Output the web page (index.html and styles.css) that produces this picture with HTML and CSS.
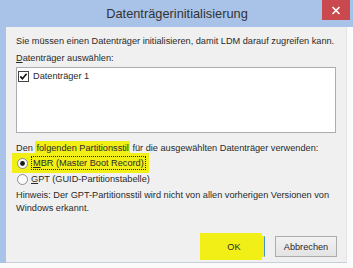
FILE: index.html
```html
<!DOCTYPE html>
<html lang="de">
<head>
    <meta charset="UTF-8">
    <meta name="viewport" content="width=device-width, initial-scale=1.0">
    <title>Datenträgerinitialisierung</title>
    <link rel="stylesheet" href="styles.css">
</head>
<body>

    <div class="window">
        <!-- Title bar -->
        <div class="titlebar">
            <div class="title">Datenträgerinitialisierung</div>
            <div class="close">
                <svg width="10" height="9" viewBox="0 0 10 9">
                    <path d="M1.5 1 L8.5 8 M8.5 1 L1.5 8" stroke="#fff" stroke-width="1.6" fill="none"/>
                </svg>
            </div>
        </div>

        <div class="frame">
            <div class="content">
                <p class="intro">Sie müssen einen Datenträger initialisieren, damit LDM darauf zugreifen kann.</p>
                <p class="label"><u>D</u>atenträger auswählen:</p>

                <!-- Disk list -->
                <div class="listbox">
                    <div class="item">
                        <svg class="checkbox" width="11" height="11" viewBox="0 0 11 11">
                            <rect x="0.5" y="0.5" width="10" height="10" fill="#fff" stroke="#444"/>
                            <path d="M2.3 5.4 L4.4 7.8 L8.6 2.8" stroke="#111" stroke-width="1.6" fill="none"/>
                        </svg>
                        <span>Datenträger 1</span>
                    </div>
                </div>

                <p class="style-label">Den <span class="marker">folgenden Partitionsstil</span> für die ausgewählten Datenträger verwenden:</p>

                <div class="options">
                    <div class="option selected">
                        <svg class="radio" width="11" height="11" viewBox="0 0 11 11">
                            <circle cx="5.5" cy="5.5" r="5" fill="#fafafa" stroke="#8c8c8c"/>
                            <circle cx="5.5" cy="5.5" r="2.4" fill="#1a1a1a"/>
                        </svg>
                        <span class="focus"><u>M</u>BR (Master Boot Record)</span>
                    </div>
                    <div class="option">
                        <svg class="radio" width="11" height="11" viewBox="0 0 11 11">
                            <circle cx="5.5" cy="5.5" r="5" fill="#fafafa" stroke="#8c8c8c"/>
                        </svg>
                        <span><u>G</u>PT (GUID-Partitionstabelle)</span>
                    </div>
                </div>

                <p class="hint">Hinweis: Der GPT-Partitionsstil wird nicht von allen vorherigen Versionen von<br>Windows erkannt.</p>

                <!-- Buttons -->
                <div class="buttons">
                    <button class="ok">OK</button>
                    <button>Abbrechen</button>
                </div>
            </div>
        </div>
    </div>

</body>
</html>
```

FILE: styles.css
```css
body {
    margin: 0;
    font-family: "Liberation Sans", Arial, sans-serif;
    font-size: 9.2px;
    color: #2a2a2a;
    background-color: #fff;
}

p {
    margin: 0;
    line-height: 13px;
    white-space: nowrap;
}

.window {
    width: 353px;
    height: 268px;
    display: flex;
    flex-direction: column;
    overflow: hidden;
    background-color: #fbfbfc;
}

.titlebar {
    flex: none;
    height: 27px;
    display: flex;
    align-items: flex-start;
    background-color: #a8c2e8;
}

.title {
    flex: 1;
    padding-left: 32px;
    text-align: center;
    font-size: 12.8px;
    line-height: 27px;
    color: #333;
}

.close {
    width: 28px;
    height: 20px;
    margin-right: 3px;
    display: flex;
    align-items: center;
    justify-content: center;
    background-color: #c9494e;
}

.frame {
    flex: none;
    height: 236px;
    display: flex;
    border-left: 6px solid #a8c2e8;
}

.content {
    flex: 1;
    margin-right: 6px;
    padding: 8px 9px 5px 10px;
    display: flex;
    flex-direction: column;
    background-color: #f0f0f0;
    border-right: 1px solid #e4e4e6;
    border-bottom: 1px solid #c6cddb;
}

.label {
    margin-top: 4px;
}

.listbox {
    height: 60px;
    margin-top: 2px;
    margin-right: 1px;
    padding: 2px 1px;
    background-color: #fff;
    border: 1px solid #abadb3;
}

.item {
    display: flex;
    align-items: center;
    gap: 4px;
    height: 13px;
    line-height: 13px;
}

.style-label {
    margin-top: 9px;
}

.marker {
    background-color: #f1ef16;
    padding: 2px 1px;
}

.options {
    display: flex;
    flex-direction: column;
    align-items: flex-start;
}

.option {
    display: flex;
    align-items: center;
    gap: 3px;
    height: 16px;
    line-height: 13px;
    padding-left: 1px;
}

.option.selected {
    margin: -2px 0 -2px -4px;
    padding: 2px 3px 2px 5px;
    background-color: #f1ef16;
}

.focus {
    border: 1px dotted #222;
    padding: 0 1px;
    line-height: 12px;
}

.hint {
    margin-top: 2px;
}

.buttons {
    margin-top: auto;
    display: flex;
    justify-content: flex-end;
    gap: 10px;
}

button {
    width: 62px;
    height: 21px;
    padding: 0;
    font-family: "Liberation Sans", Arial, sans-serif;
    font-size: 9.2px;
    color: #2a2a2a;
    background: linear-gradient(#f2f2f2, #e3e3e3);
    border: 1px solid #acacac;
}

button.ok {
    background: #f1ef16;
    border-color: #f1ef16 #4a8fd0 #f1ef16 #f1ef16;
    box-shadow: -3px -3px 0 #f1ef16, -3px 3px 0 #f1ef16;
}
```
